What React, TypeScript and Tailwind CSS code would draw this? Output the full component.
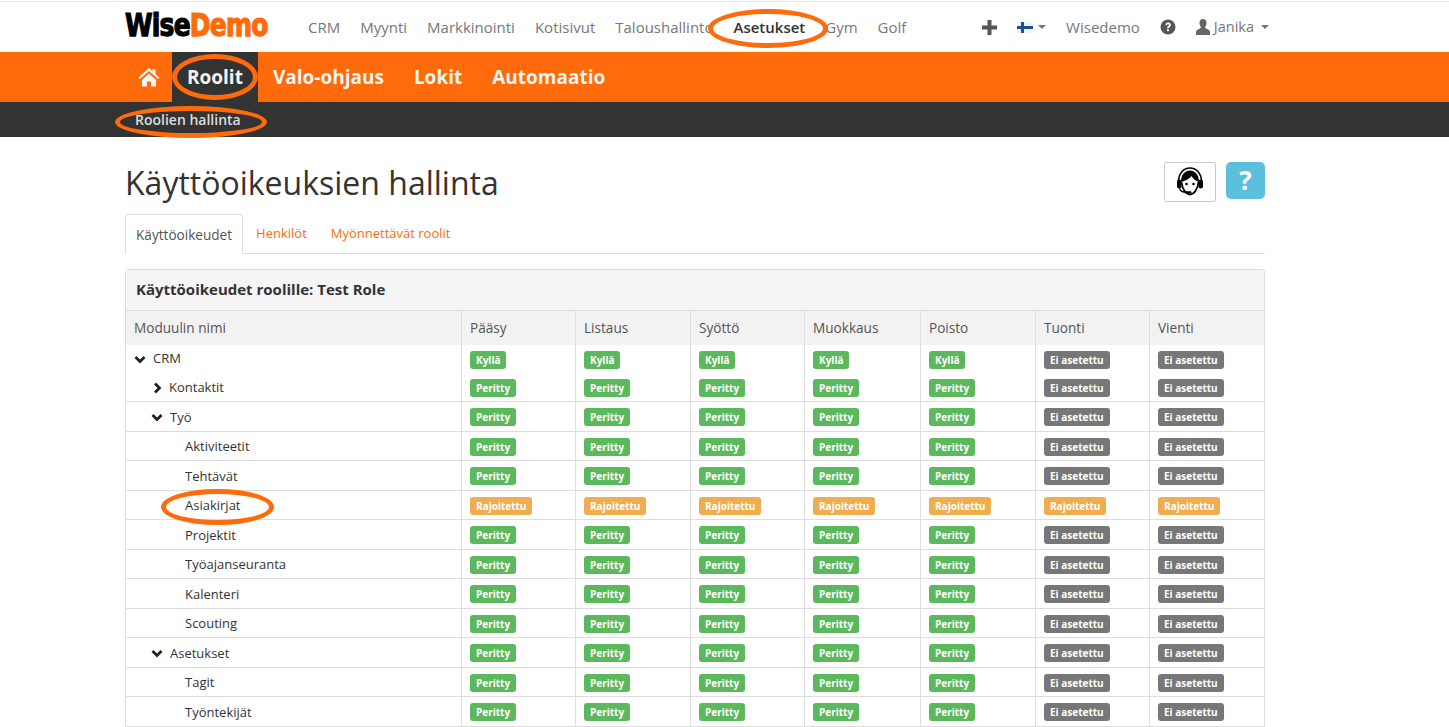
import React from "react";

type Kind = "y" | "p" | "r";
type Row = { name: string; level: number; icon?: "down" | "right"; kind: Kind; border: boolean };

const rows: Row[] = [
  { name: "CRM", level: 0, icon: "down", kind: "y", border: false },
  { name: "Kontaktit", level: 1, icon: "right", kind: "p", border: false },
  { name: "Työ", level: 1, icon: "down", kind: "p", border: true },
  { name: "Aktiviteetit", level: 2, kind: "p", border: true },
  { name: "Tehtävät", level: 2, kind: "p", border: true },
  { name: "Asiakirjat", level: 2, kind: "r", border: true },
  { name: "Projektit", level: 2, kind: "p", border: true },
  { name: "Työajanseuranta", level: 2, kind: "p", border: true },
  { name: "Kalenteri", level: 2, kind: "p", border: true },
  { name: "Scouting", level: 2, kind: "p", border: true },
  { name: "Asetukset", level: 1, icon: "down", kind: "p", border: true },
  { name: "Tagit", level: 2, kind: "p", border: true },
  { name: "Työntekijät", level: 2, kind: "p", border: true },
];

const cols = ["Pääsy", "Listaus", "Syöttö", "Muokkaus", "Poisto", "Tuonti", "Vienti"];
const widths = ["w-[114px]", "w-[115px]", "w-[114px]", "w-[116px]", "w-[115px]", "w-[114px]", "w-[114px]"];

function Badge({ text, color }: { text: string; color: string }) {
  return (
    <span className={`inline-flex h-[18px] translate-y-[1px] items-center rounded-[3px] px-[6px] text-[10px] font-bold leading-none text-white ${color}`}>
      {text}
    </span>
  );
}

function cellBadge(kind: Kind, i: number) {
  if (kind === "r") return <Badge text="Rajoitettu" color="bg-[#f0ad4e]" />;
  if (i >= 5) return <Badge text="Ei asetettu" color="bg-[#777777]" />;
  return <Badge text={kind === "y" ? "Kyllä" : "Peritty"} color="bg-[#5cb85c]" />;
}

function Ellipse({ className }: { className: string }) {
  return <span className={`pointer-events-none absolute rounded-[50%] border-[5px] border-[#ff6a0a] ${className}`} />;
}

function ChevronDown({ className }: { className: string }) {
  return (
    <svg width="12" height="9" viewBox="0 0 12 9" className={className}>
      <path d="M1.500 2 6 6.500 10.500 2" fill="none" stroke="#222222" strokeWidth="2.800" />
    </svg>
  );
}

function ChevronRight({ className }: { className: string }) {
  return (
    <svg width="9" height="12" viewBox="0 0 9 12" className={className}>
      <path d="M2 1.500 6.500 6 2 10.500" fill="none" stroke="#222222" strokeWidth="2.800" />
    </svg>
  );
}

function Home() {
  return (
    <svg width="22" height="20" viewBox="0 0 22 20">
      <path d="M11 1 0.500 10.500 2 12l9-8 9 8 1.500-1.500L17.500 7V2h-3v2.300z" fill="#f5f5f5" />
      <path d="M4 13 11 6.500l7 6.500v6.500h-5v-5H9v5H4z" fill="#f5f5f5" />
    </svg>
  );
}

function Plus() {
  return (
    <svg width="15" height="15" viewBox="0 0 15 15">
      <path d="M5.500 0h4v5.500H15v4H9.500V15h-4V9.500H0v-4h5.500z" fill="#555555" />
    </svg>
  );
}

function Help() {
  return (
    <svg width="16" height="16" viewBox="0 0 16 16">
      <circle cx="8" cy="8" r="7.500" fill="#555555" />
      <path d="M5.300 6.200C5.500 4.500 6.700 3.600 8.200 3.600c1.600 0 2.700 1 2.700 2.300 0 1.200-.7 1.700-1.400 2.200-.5.4-.7.600-.7 1.200H7c0-1.100.4-1.600 1.100-2.100.5-.4.900-.7.900-1.200 0-.5-.4-.8-.9-.8-.6 0-1 .4-1.100 1z" fill="#fff" />
      <rect x="7" y="10.300" width="1.900" height="1.900" fill="#fff" />
    </svg>
  );
}

function User() {
  return (
    <svg width="16" height="16" viewBox="0 0 16 16">
      <path d="M8 0c2.200 0 3.500 1.600 3.500 4 0 1.700-.7 3.100-1.500 4 .1.900.6 1.300 2 1.900 1.700.7 3 1.300 3 3.100v3H1v-3c0-1.800 1.300-2.400 3-3.100C5.400 9.300 5.900 8.900 6 8c-.8-.9-1.500-2.300-1.500-4C4.500 1.600 5.800 0 8 0z" fill="#666666" />
    </svg>
  );
}

function Agent() {
  return (
    <svg width="32" height="32" viewBox="0 0 32 32">
      <path d="M4.500 16C4.500 7.500 9.500 2 16 2s11.500 5.500 11.500 14" fill="none" stroke="#000" strokeWidth="1.600" />
      <path d="M7 16C7 8.500 11 4.500 16 4.500S25 8.500 25 16c-3-1-6-3-7.500-6C15.500 13 11 15 7 16z" fill="#000" />
      <path d="M7.500 16c.8 7.500 4.500 12.500 8.500 12.500s7.700-5 8.500-12.500" fill="none" stroke="#000" strokeWidth="1.800" />
      <rect x="3" y="13.500" width="4.500" height="9" rx="2.200" fill="#000" />
      <rect x="24.500" y="13.500" width="4.500" height="9" rx="2.200" fill="#000" />
      <circle cx="12.500" cy="18" r="1.300" fill="#000" />
      <circle cx="19.500" cy="18" r="1.300" fill="#000" />
      <path d="M5.500 22.500c.7 2.500 3 3.800 7 3.800" fill="none" stroke="#000" strokeWidth="1.300" />
      <path d="M12.500 26.300h4" stroke="#000" strokeWidth="2.200" strokeLinecap="round" />
    </svg>
  );
}

function Flag() {
  return (
    <svg width="16" height="11" viewBox="0 0 16 11">
      <rect width="16" height="11" fill="#f0f3fa" />
      <rect x="4" width="3" height="11" fill="#1a4f9c" />
      <rect y="4" width="16" height="3" fill="#1a4f9c" />
    </svg>
  );
}

export default function App() {
  return (
    <div style={{ fontFamily: '"Open Sans", sans-serif' }} className="relative h-[727px] overflow-hidden bg-white text-[13px] text-[#333333]">
      <header className="mt-px flex h-[51px] border-t border-[#e7e7e7] pl-[125px]">
        <div className="flex w-[1144px] items-center text-[15px] text-[#777777]">
          <div
            className="w-[145px] origin-center scale-y-125 pb-[3px] text-[25px] font-bold leading-none tracking-[-0.8px] [-webkit-text-stroke:1px_currentColor]"
            style={{ fontFamily: '"DejaVu Sans", sans-serif' }}
          >
            <span className="text-black">Wise</span>
            <span className="text-[#ff6a0a]">Demo</span>
          </div>
          <nav className="ml-[38px] flex gap-[20px]">
            <span>CRM</span>
            <span>Myynti</span>
            <span>Markkinointi</span>
            <span>Kotisivut</span>
            <span>Taloushallinto</span>
            <span className="font-semibold text-[#333333]">Asetukset</span>
            <span>Gym</span>
            <span>Golf</span>
          </nav>
          <div className="ml-auto flex items-center">
            <Plus />
            <span className="ml-[20px]">
              <Flag />
            </span>
            <span className="ml-[5px] h-0 w-0 border-x-[4px] border-t-[4px] border-x-transparent border-t-[#777777]" />
            <span className="ml-[20px]">Wisedemo</span>
            <span className="ml-[20px]">
              <Help />
            </span>
            <span className="ml-[19px]">
              <User />
            </span>
            <span className="ml-[3px] text-[14.500px]">Janika</span>
            <span className="ml-[7px] h-0 w-0 border-x-[4px] border-t-[4px] border-x-transparent border-t-[#777777]" />
          </div>
        </div>
      </header>

      <div className="flex h-[50px] bg-[#ff6a0a] pl-[125px] text-[19px] font-bold text-[#f5f5f5]">
        <div className="flex w-[47px] items-center justify-center">
          <Home />
        </div>
        <div className="flex items-center bg-[#333333] px-[15px]">Roolit</div>
        <div className="flex items-center px-[15px]">Valo-ohjaus</div>
        <div className="flex items-center px-[15px]">Lokit</div>
        <div className="flex items-center px-[15px]">Automaatio</div>
      </div>

      <div className="h-[35px] bg-[#333333] pl-[135px] pt-[8px] text-[14px] font-semibold leading-[20px] text-[#dddddd]">Roolien hallinta</div>

      <main className="ml-[125px] w-[1140px]">
        <div className="flex h-[77px] items-start justify-between">
          <h1 className="mt-[26px] text-[32px] font-normal leading-[40px] text-[#333333]">Käyttöoikeuksien hallinta</h1>
          <div className="mt-[25px] flex items-start gap-[10px]">
            <div className="flex h-[40px] w-[52px] items-center justify-center rounded-[2px] border border-[#cccccc]">
              <Agent />
            </div>
            <div className="flex h-[37px] w-[39px] items-center justify-center rounded-[5px] bg-[#5bc0de] text-[26px] font-bold text-white">?</div>
          </div>
        </div>

        <div className="flex h-[40px] border-b border-[#dddddd]">
          <div className="flex h-[40px] items-center rounded-t-[3px] border border-b-0 border-[#dddddd] bg-white px-[10px] pt-[1px] text-[13.600px] text-[#555555]">Käyttöoikeudet</div>
          <div className="flex h-[39px] items-center pl-[13px] pr-[12px] pt-[1px] text-[#ff6a0a]">Henkilöt</div>
          <div className="flex h-[39px] items-center px-[12px] pt-[1px] text-[#ff6a0a]">Myönnettävät roolit</div>
        </div>

        <section className="mt-[15px] rounded-t-[3px] border border-[#dddddd]">
          <div className="flex h-[41px] items-center border-b border-[#dddddd] bg-[#f5f5f5] px-[10px] pb-[2px] text-[15px] font-bold text-[#333333]">
            Käyttöoikeudet roolille: Test Role
          </div>
          <div className="flex h-[34px] items-center bg-[#f2f2f2] text-[13.600px] text-[#555555]">
            <div className="flex h-full w-[336px] items-center border-r border-[#dddddd] pl-[8px]">Moduulin nimi</div>
            {cols.map((c, i) => (
              <div key={c} className={`flex h-full items-center pl-[8px] ${widths[i]} ${i < 6 ? "border-r border-[#dddddd]" : ""}`}>
                {c}
              </div>
            ))}
          </div>
          {rows.map((r) => (
            <div key={r.name} className={`flex ${r.border ? "h-[29.500px] border-t border-[#dddddd]" : "h-[28px]"}`}>
              <div
                className={`flex h-full w-[336px] items-center border-r border-[#dddddd] ${r.name === "CRM" ? "" : "pt-[2px]"} ${
                  r.level === 0 ? "pl-[8px]" : r.level === 1 ? "pl-[25px]" : "pl-[59px]"
                }`}
              >
                {r.icon === "down" && <ChevronDown className="mr-[7px]" />}
                {r.icon === "right" && <ChevronRight className="ml-[2px] mr-[7px]" />}
                <span>{r.name}</span>
              </div>
              {cols.map((c, i) => (
                <div key={c} className={`flex h-full items-center pl-[8px] ${widths[i]} ${i < 6 ? "border-r border-[#dddddd]" : ""}`}>
                  {cellBadge(r.kind, i)}
                </div>
              ))}
            </div>
          ))}
        </section>
      </main>

      <Ellipse className="left-[708px] top-[9px] h-[39px] w-[120px]" />
      <Ellipse className="left-[172px] top-[54px] h-[46px] w-[86px]" />
      <Ellipse className="left-[115px] top-[106px] h-[32px] w-[152px]" />
      <Ellipse className="left-[161px] top-[489px] h-[36px] w-[113px]" />
    </div>
  );
}
